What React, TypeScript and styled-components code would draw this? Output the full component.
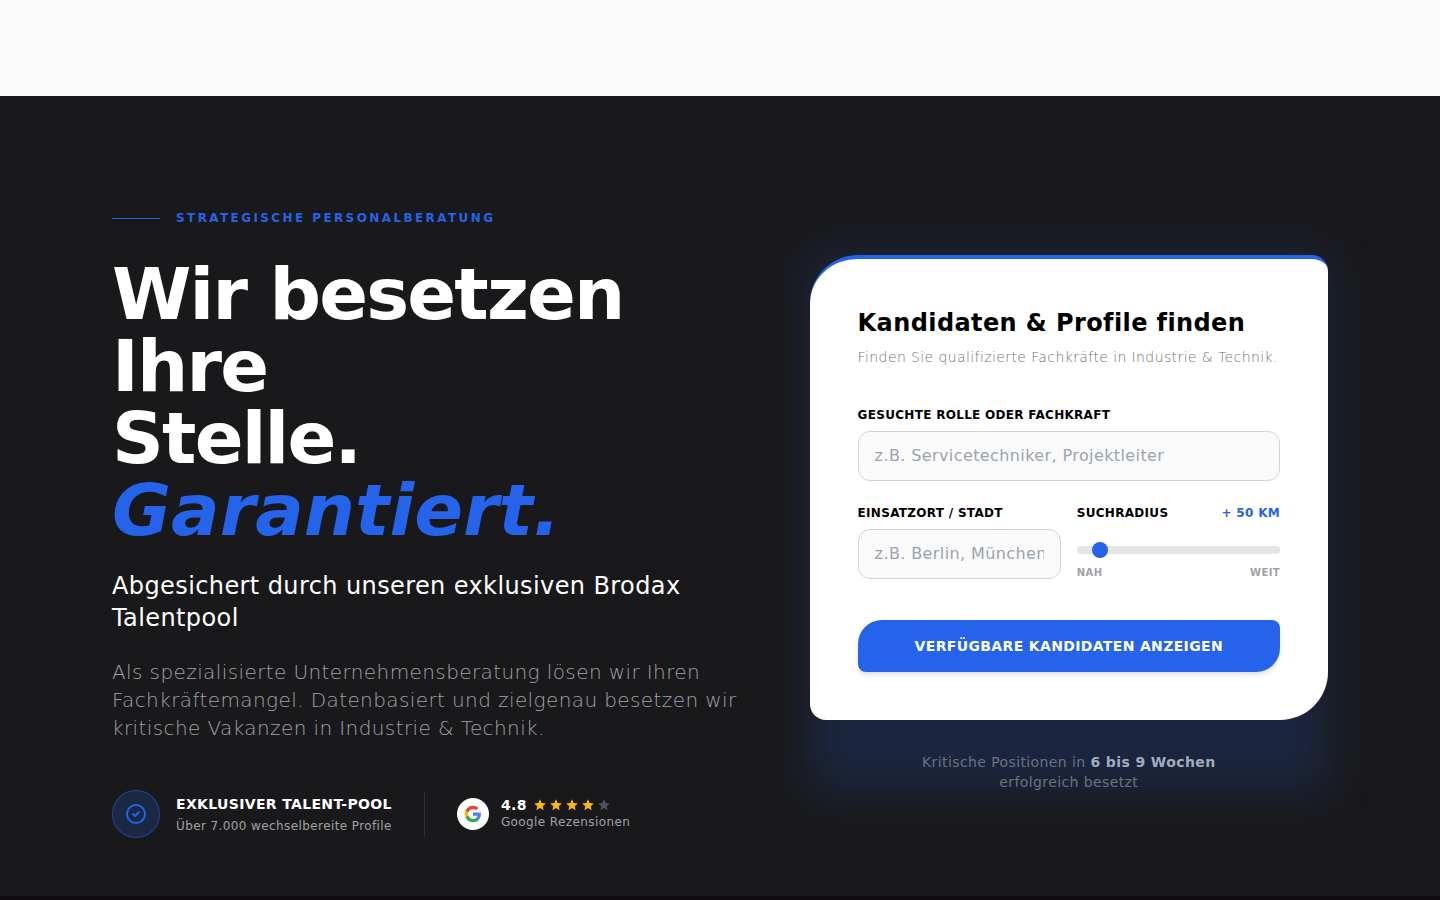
import React, { useState } from "react";
import styled, { createGlobalStyle } from "styled-components";

const blue = "#2563eb";

const GlobalStyle = createGlobalStyle`
  *, *::before, *::after { box-sizing: border-box; }
  body {
    margin: 0;
    background: #fafafa;
    color: #000;
    font-family: "DejaVu Sans", sans-serif;
    font-size: 16px;
    letter-spacing: 0.025em;
  }
  h1, h2, p { margin: 0; }
  input, button { font: inherit; letter-spacing: inherit; }
`;

const HeaderSpace = styled.header`
  height: 96px;
`;

const Hero = styled.section`
  background: #19191b;
  color: #fff;
  padding: 113px 0 58px;
  overflow: hidden;
`;

const NextSection = styled.section`
  background: #0f0a10;
  height: 4px;
`;

const Container = styled.div`
  max-width: 1280px;
  margin: 0 auto;
  padding: 0 32px;
  display: grid;
  grid-template-columns: minmax(0, 11fr) minmax(0, 9fr);
  gap: 64px;
  align-items: center;

  @media (max-width: 1000px) {
    grid-template-columns: minmax(0, 1fr);
  }
`;

const Eyebrow = styled.div`
  display: flex;
  align-items: center;
  gap: 16px;
  margin-bottom: 31px;
  color: ${blue};
  font-size: 12px;
  line-height: 18px;
  font-weight: 700;
  letter-spacing: 0.2em;
  text-transform: uppercase;

  &::before {
    content: "";
    width: 48px;
    height: 1px;
    background: ${blue};
  }
`;

const Headline = styled.h1`
  font-size: 72px;
  line-height: 72px;
  font-weight: 700;
  letter-spacing: -0.025em;
  margin-bottom: 24px;

  em {
    color: ${blue};
    letter-spacing: 0;
  }
`;

const Subline = styled.p`
  font-size: 24px;
  line-height: 32px;
  margin-bottom: 24px;
`;

const Lead = styled.p`
  color: #a1a1a6;
  font-size: 20px;
  line-height: 28px;
  font-weight: 300;
  margin-bottom: 48px;
`;

const TrustRow = styled.div`
  display: flex;
  flex-wrap: wrap;
  align-items: center;
  gap: 32px;
`;

const TrustItem = styled.div<{ $gap: number }>`
  display: flex;
  align-items: center;
  gap: ${(p) => p.$gap}px;
`;

const PoolBadge = styled.span`
  display: grid;
  place-items: center;
  width: 48px;
  height: 48px;
  border-radius: 50%;
  background: rgba(37, 99, 235, 0.2);
  border: 1px solid rgba(37, 99, 235, 0.5);
`;

const GoogleBadge = styled.span`
  display: grid;
  place-items: center;
  width: 32px;
  height: 32px;
  border-radius: 50%;
  background: #fff;
`;

const PoolTitle = styled.p`
  font-size: 14px;
  line-height: 20px;
  font-weight: 700;
  letter-spacing: 0.025em;
  text-transform: uppercase;
`;

const TrustNote = styled.p<{ $gap: number }>`
  color: #a1a1a6;
  font-size: 12px;
  line-height: 16px;
  margin-top: ${(p) => p.$gap}px;
`;

const Divider = styled.span`
  width: 1px;
  height: 44px;
  background: rgba(255, 255, 255, 0.1);
`;

const Rating = styled.div`
  display: flex;
  align-items: center;
  gap: 6px;
  font-size: 14px;
  line-height: 14px;
  font-weight: 700;
`;

const Stars = styled.span`
  display: flex;
  gap: 2px;
`;

const FinderColumn = styled.div`
  position: relative;
  isolation: isolate;

  &::before {
    content: "";
    position: absolute;
    inset: 0;
    z-index: -1;
    background: rgba(37, 99, 235, 0.18);
    filter: blur(24px);
  }
`;

const Card = styled.form`
  background: #fff;
  color: #000;
  border-top: 4px solid ${blue};
  border-radius: 48px 16px 48px 16px;
  padding: 48px;
`;

const CardTitle = styled.h2`
  font-size: 24px;
  line-height: 32px;
  font-weight: 700;
  margin-bottom: 8px;
`;

const CardText = styled.p`
  color: #737373;
  font-size: 14px;
  line-height: 20px;
  font-weight: 300;
  margin-bottom: 40px;
`;

const Field = styled.div`
  display: flex;
  flex-direction: column;
  min-width: 0;
`;

const FieldRow = styled.div`
  display: grid;
  grid-template-columns: repeat(2, minmax(0, 1fr));
  gap: 16px;
  margin: 24px 0 40px;
`;

const LabelRow = styled.div`
  display: flex;
  justify-content: space-between;
  margin-bottom: 8px;
  font-size: 12px;
  line-height: 16px;
  font-weight: 700;
  letter-spacing: 0.025em;
  text-transform: uppercase;
`;

const Radius = styled.output`
  color: ${blue};
`;

const TextInput = styled.input`
  width: 100%;
  height: 50px;
  padding: 0 16px 2px;
  border: 1px solid #d4d4d4;
  border-radius: 12px;
  background: #fafafa;
  color: #000;

  &::placeholder { color: #9ca3af; opacity: 1; }
`;

const Slider = styled.input`
  appearance: none;
  width: 100%;
  height: 8px;
  margin: 17px 0 11px;
  border-radius: 8px;
  background: #e5e5e5;

  &::-webkit-slider-thumb {
    appearance: none;
    width: 16px;
    height: 16px;
    border-radius: 50%;
    background: ${blue};
  }
`;

const Scale = styled.div`
  display: flex;
  justify-content: space-between;
  color: #a1a1a6;
  font-size: 10px;
  line-height: 15px;
  font-weight: 700;
  text-transform: uppercase;
`;

const Submit = styled.button`
  width: 100%;
  padding: 16px;
  border: 0;
  border-radius: 24px 8px 24px 8px;
  background: ${blue};
  color: #fff;
  font-size: 14px;
  line-height: 20px;
  font-weight: 700;
  letter-spacing: 0.025em;
  text-transform: uppercase;
  box-shadow: 0 4px 6px -1px rgba(0, 0, 0, 0.1), 0 2px 4px -2px rgba(0, 0, 0, 0.1);
`;

const Footnote = styled.p`
  max-width: 320px;
  margin: 32px auto 0;
  color: #6b7280;
  font-size: 14px;
  line-height: 20px;
  text-align: center;

  strong { color: #a3acbd; }
`;

const CheckIcon = () => (
  <svg width="24" height="24" viewBox="0 0 24 24" fill="none" stroke={blue} strokeWidth="2" strokeLinecap="round" strokeLinejoin="round" aria-hidden="true">
    <path d="M9 12l2 2 4-4m6 2a9 9 0 11-18 0 9 9 0 0118 0z" />
  </svg>
);

const GoogleIcon = () => (
  <svg width="18" height="18" viewBox="0 0 24 24" aria-label="Google" role="img">
    <path fill="#4285F4" d="M22.56 12.25c0-.78-.07-1.53-.2-2.25H12v4.26h5.92c-.26 1.37-1.04 2.53-2.21 3.31v2.77h3.57c2.08-1.92 3.28-4.74 3.28-8.09z" />
    <path fill="#34A853" d="M12 23c2.97 0 5.46-.98 7.28-2.66l-3.57-2.77c-.98.66-2.23 1.06-3.71 1.06-2.86 0-5.29-1.93-6.16-4.53H2.18v2.84C3.99 20.53 7.7 23 12 23z" />
    <path fill="#FBBC05" d="M5.84 14.09c-.22-.66-.35-1.36-.35-2.09s.13-1.43.35-2.09V7.07H2.18C1.43 8.55 1 10.22 1 12s.43 3.45 1.18 4.93l3.66-2.84z" />
    <path fill="#EA4335" d="M12 5.38c1.62 0 3.06.56 4.21 1.64l3.15-3.15C17.45 2.09 14.97 1 12 1 7.7 1 3.99 3.47 2.18 7.07l3.66 2.84c.87-2.6 3.3-4.53 6.16-4.53z" />
  </svg>
);

const Star = ({ filled }: { filled: boolean }) => (
  <svg width="14" height="14" viewBox="0 0 24 24" fill={filled ? "#fbbc05" : "#52525b"} aria-hidden="true">
    <path d="M12 17.27L18.18 21l-1.64-7.03L22 9.24l-7.19-.61L12 2 9.19 8.63 2 9.24l5.46 4.73L5.82 21z" />
  </svg>
);

export default function App() {
  const [radius, setRadius] = useState(50);

  return (
    <>
      <GlobalStyle />
      <HeaderSpace />
      <main>
        <Hero>
          <Container>
            <div>
              <Eyebrow>Strategische Personalberatung</Eyebrow>
              <Headline>
                Wir besetzen Ihre
                <br />
                Stelle. <em>Garantiert.</em>
              </Headline>
              <Subline>Abgesichert durch unseren exklusiven Brodax Talentpool</Subline>
              <Lead>
                Als spezialisierte Unternehmensberatung lösen wir Ihren Fachkräftemangel. Datenbasiert und
                zielgenau besetzen wir kritische Vakanzen in Industrie &amp; Technik.
              </Lead>
              <TrustRow>
                <TrustItem $gap={16}>
                  <PoolBadge>
                    <CheckIcon />
                  </PoolBadge>
                  <div>
                    <PoolTitle>Exklusiver Talent-Pool</PoolTitle>
                    <TrustNote $gap={4}>Über 7.000 wechselbereite Profile</TrustNote>
                  </div>
                </TrustItem>
                <Divider />
                <TrustItem $gap={12}>
                  <GoogleBadge>
                    <GoogleIcon />
                  </GoogleBadge>
                  <div>
                    <Rating>
                      4.8
                      <Stars>
                        {[1, 2, 3, 4, 5].map((n) => (
                          <Star key={n} filled={n < 5} />
                        ))}
                      </Stars>
                    </Rating>
                    <TrustNote $gap={2}>Google Rezensionen</TrustNote>
                  </div>
                </TrustItem>
              </TrustRow>
            </div>

            <FinderColumn>
              <Card onSubmit={(e) => e.preventDefault()}>
                <CardTitle>Kandidaten &amp; Profile finden</CardTitle>
                <CardText>Finden Sie qualifizierte Fachkräfte in Industrie &amp; Technik.</CardText>
                <Field>
                  <LabelRow>
                    <label htmlFor="role">Gesuchte Rolle oder Fachkraft</label>
                  </LabelRow>
                  <TextInput id="role" type="text" placeholder="z.B. Servicetechniker, Projektleiter" />
                </Field>
                <FieldRow>
                  <Field>
                    <LabelRow>
                      <label htmlFor="city">Einsatzort / Stadt</label>
                    </LabelRow>
                    <TextInput id="city" type="text" placeholder="z.B. Berlin, München" />
                  </Field>
                  <Field>
                    <LabelRow>
                      <label htmlFor="radius">Suchradius</label>
                      <Radius htmlFor="radius">+ {radius} km</Radius>
                    </LabelRow>
                    <Slider
                      id="radius"
                      type="range"
                      min={10}
                      max={500}
                      step={10}
                      value={radius}
                      onChange={(e) => setRadius(Number(e.target.value))}
                    />
                    <Scale>
                      <span>Nah</span>
                      <span>Weit</span>
                    </Scale>
                  </Field>
                </FieldRow>
                <Submit type="submit">Verfügbare Kandidaten anzeigen</Submit>
              </Card>
              <Footnote>
                Kritische Positionen in <strong>6 bis 9 Wochen</strong> erfolgreich besetzt
              </Footnote>
            </FinderColumn>
          </Container>
        </Hero>
        <NextSection />
      </main>
    </>
  );
}
